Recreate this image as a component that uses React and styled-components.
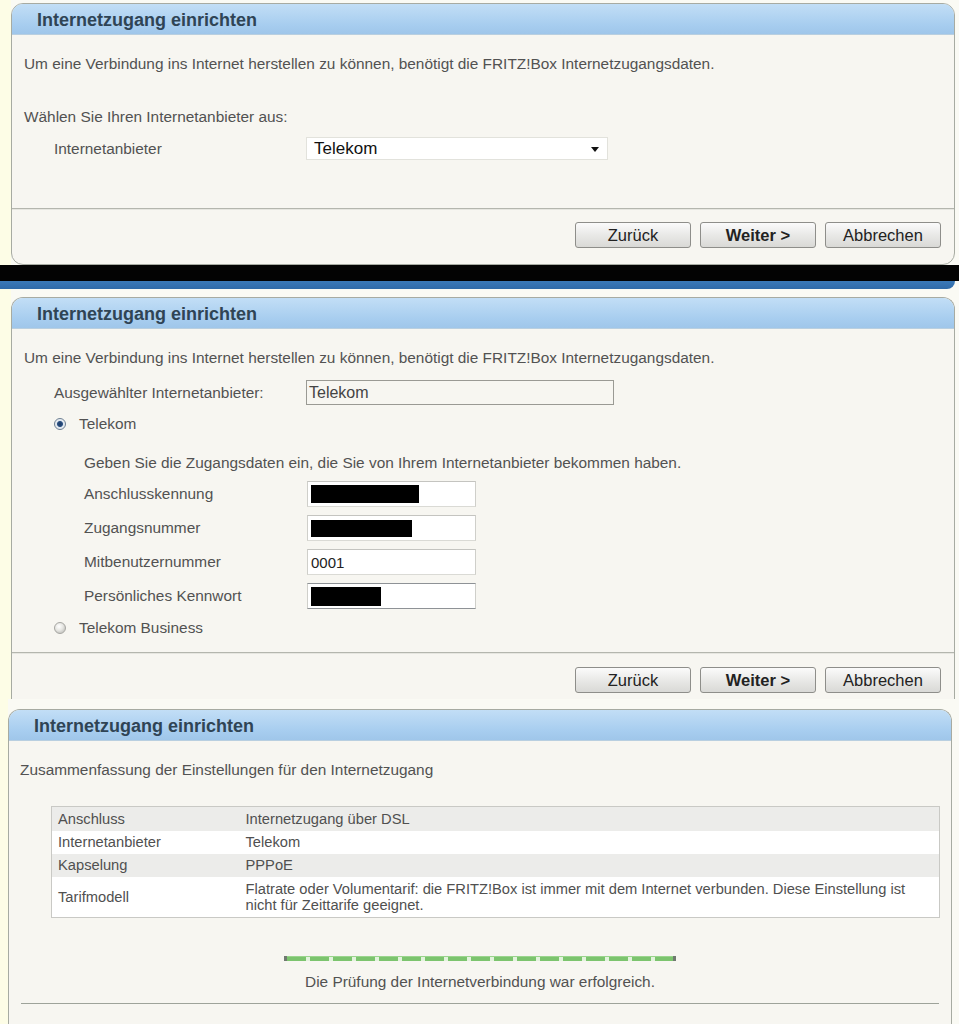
import React from "react";
import styled, { createGlobalStyle } from "styled-components";

const Global = createGlobalStyle`
  html, body { margin: 0; padding: 0; background: #fafaf4; }
  body { font-family: "Liberation Sans", Arial, sans-serif; }
  * { box-sizing: border-box; }
`;

const Page = styled.div`
  width: 959px;
  height: 1024px;
  overflow: hidden;
  display: flex;
  flex-direction: column;
  background: #fafaf4;
`;

const Screen = styled.div`
  display: flex;
  padding-left: ${(p) => p.$left}px;
  padding-top: ${(p) => p.$top || 0}px;
  background: linear-gradient(to right, #fdfde6 0, #fdfde6 ${(p) => p.$left}px, #fafaf4 ${(p) => p.$left}px);
`;

const Panel = styled.section`
  width: 944px;
  background: #f7f6f1;
  border: 1px solid #a7aba2;
  border-bottom: ${(p) => (p.$open ? "none" : "1px solid #a7aba2")};
  border-radius: ${(p) => (p.$open ? "12px 12px 0 0" : "12px")};
  overflow: hidden;
  display: flex;
  flex-direction: column;
`;

const Header = styled.header`
  height: 31px;
  padding: 3px 0 0 25px;
  background: linear-gradient(#c2def6, #a7cdef 70%, #9fc6ea);
  border-bottom: 1px solid #b9cfe0;
  font-size: 18px;
  font-weight: bold;
  line-height: 27px;
  color: #2f4455;
`;

const Body = styled.div`
  display: flex;
  flex-direction: column;
  padding: ${(p) => p.$pad};
  color: #525252;
  font-size: 15.4px;
`;

const Para = styled.p`
  margin: ${(p) => p.$m || "0"};
  line-height: 20px;
  padding-left: ${(p) => p.$indent || 0}px;
  text-align: ${(p) => p.$align || "left"};
`;

const FieldRow = styled.div`
  display: flex;
  align-items: center;
  margin-top: ${(p) => p.$mt || 0}px;
  padding-left: ${(p) => p.$indent}px;
`;

const Label = styled.span`
  width: ${(p) => p.$w}px;
  flex: none;
  line-height: 20px;
`;

const Select = styled.div`
  position: relative;
  width: 302px;
  height: 23px;
  background: #fff;
  border: 1px solid #e2e2dc;
  color: #111;
  font-size: 17px;
  line-height: 21px;
  padding-left: 7px;
  &::after {
    content: "";
    position: absolute;
    right: 8px;
    top: 9px;
    border-left: 4px solid transparent;
    border-right: 4px solid transparent;
    border-top: 5px solid #111;
  }
`;

const ReadOnly = styled.div`
  width: 308px;
  height: 25px;
  border: 1px solid #9a9a94;
  background: #f7f6f1;
  color: #444;
  font-size: 16px;
  line-height: 23px;
  padding-left: 2px;
`;

const TextField = styled.div`
  width: 169px;
  height: 26px;
  background: #fff;
  border: 1px solid #cfcfca;
  border-top-color: ${(p) => (p.$focus ? "#8e9296" : "#c4c4c0")};
  border-bottom-color: ${(p) => (p.$focus ? "#8e9296" : "#dadad5")};
  display: flex;
  align-items: center;
  padding-left: 3px;
  color: #222;
  font-size: 15px;
`;

const Mask = styled.span`
  display: block;
  height: ${(p) => p.$h || 18}px;
  background: #000;
`;

const RadioRow = styled.label`
  display: flex;
  align-items: center;
  gap: 13px;
  padding-left: 30px;
  margin-top: ${(p) => p.$mt}px;
  line-height: 20px;
`;

const Radio = styled.span`
  width: 12px;
  height: 12px;
  border-radius: 50%;
  border: 1px solid ${(p) => (p.$on ? "#6d7f92" : "#a6a6a2")};
  background: ${(p) =>
    p.$on
      ? "radial-gradient(circle, #1d3b66 0, #2a4f80 2.5px, #dfe6ee 3.5px, #f4f6f8 6px)"
      : "radial-gradient(circle at 40% 35%, #ffffff 0, #e6e6e2 4px, #cfcfcb 6px)"};
`;

const Divider = styled.div`
  height: 1px;
  background: #b4b6ae;
  border-bottom: 1px solid #e6e6e0;
  box-sizing: content-box;
`;

const Footer = styled.div`
  display: flex;
  justify-content: flex-end;
  gap: 9px;
  padding: ${(p) => p.$pad};
`;

const Button = styled.button`
  width: 116px;
  height: 26px;
  border: 1px solid #8e8e8a;
  border-radius: 3px;
  background: linear-gradient(#fbfbfb, #e9e9e7 50%, #d9d9d6);
  font-family: inherit;
  font-size: 16.5px;
  font-weight: ${(p) => (p.$primary ? "bold" : "normal")};
  color: #222;
  padding: 0;
  cursor: pointer;
`;

const BlackBar = styled.div`
  height: 18px;
  background: #030303;
`;

const BlueBar = styled.div`
  height: 9px;
  width: 955px;
  background: linear-gradient(#3a79b8, #2f6aa8);
  border-bottom-right-radius: 9px;
`;

const Table = styled.table`
  margin: 26px 0 0 42px;
  width: 889px;
  table-layout: fixed;
  border-collapse: collapse;
  border: 1px solid #c9c9c5;
  font-size: 14.7px;
  color: #505050;
`;

const Tr = styled.tr`
  background: ${(p) => (p.$shade ? "#ececea" : "#ffffff")};
`;

const Td = styled.td`
  padding: 0 6px;
  height: ${(p) => (p.$tall ? "41px" : p.$first ? "24px" : "23px")};
  line-height: 16px;
  vertical-align: middle;
`;

const Progress = styled.div`
  align-self: center;
  margin-top: 38px;
  width: 392px;
  height: 5px;
  border-left: 3px solid #707a70;
  border-right: 3px solid #707a70;
  background:
    repeating-linear-gradient(to right, #7cc46e 0, #7cc46e 19px, #e3f3dd 19px, #e3f3dd 23px),
    #7cc46e;
  box-shadow: inset 0 1px 0 #9ad58d;
`;

const InnerRule = styled.div`
  margin: 11px 12px 0 12px;
  height: 1px;
  background: #9ea39a;
`;

const summary = [
  ["Anschluss", "Internetzugang über DSL"],
  ["Internetanbieter", "Telekom"],
  ["Kapselung", "PPPoE"],
  [
    "Tarifmodell",
    "Flatrate oder Volumentarif: die FRITZ!Box ist immer mit dem Internet verbunden. Diese Einstellung ist nicht für Zeittarife geeignet.",
  ],
];

const credentials = [
  { label: "Anschlusskennung", mask: 108 },
  { label: "Zugangsnummer", mask: 101, h: 17 },
  { label: "Mitbenutzernummer", text: "0001" },
  { label: "Persönliches Kennwort", mask: 70, h: 19, focus: true },
];

function Buttons({ pad }) {
  return (
    <Footer $pad={pad}>
      <Button>Zurück</Button>
      <Button $primary>Weiter &gt;</Button>
      <Button>Abbrechen</Button>
    </Footer>
  );
}

export default function App() {
  return (
    <Page>
      <Global />
      <Screen $left={11} $top={3}>
        <Panel>
          <Header>Internetzugang einrichten</Header>
          <Body $pad="19px 0 48px 12px">
            <Para>
              Um eine Verbindung ins Internet herstellen zu können, benötigt die FRITZ!Box Internetzugangsdaten.
            </Para>
            <Para $m="33px 0 0 0">Wählen Sie Ihren Internetanbieter aus:</Para>
            <FieldRow $mt={10} $indent={30}>
              <Label $w={252}>Internetanbieter</Label>
              <Select>Telekom</Select>
            </FieldRow>
          </Body>
          <Divider />
          <Buttons pad="12px 13px 16px 0" />
        </Panel>
      </Screen>

      <BlackBar />
      <BlueBar />

      <Screen $left={11} $top={8}>
        <Panel $open>
          <Header>Internetzugang einrichten</Header>
          <Body $pad="19px 0 14px 12px">
            <Para>
              Um eine Verbindung ins Internet herstellen zu können, benötigt die FRITZ!Box Internetzugangsdaten.
            </Para>
            <FieldRow $mt={12} $indent={30}>
              <Label $w={252}>Ausgewählter Internetanbieter:</Label>
              <ReadOnly>Telekom</ReadOnly>
            </FieldRow>
            <RadioRow $mt={9}>
              <Radio $on />
              Telekom
            </RadioRow>
            <Para $m="19px 0 0 0" $indent={60}>
              Geben Sie die Zugangsdaten ein, die Sie von Ihrem Internetanbieter bekommen haben.
            </Para>
            {credentials.map((c) => (
              <FieldRow key={c.label} $mt={8} $indent={60}>
                <Label $w={223}>{c.label}</Label>
                <TextField $focus={c.focus}>
                  {c.text ? c.text : <Mask $h={c.h} style={{ width: c.mask }} />}
                </TextField>
              </FieldRow>
            ))}
            <RadioRow $mt={9}>
              <Radio />
              Telekom Business
            </RadioRow>
          </Body>
          <Divider />
          <Buttons pad="13px 13px 6px 0" />
        </Panel>
      </Screen>

      <Screen $left={8} $top={10}>
        <Panel $open>
          <Header>Internetzugang einrichten</Header>
          <Body $pad="19px 0 20px 0">
            <Para $indent={11}>Zusammenfassung der Einstellungen für den Internetzugang</Para>
            <Table>
              <colgroup>
                <col style={{ width: 188 }} />
                <col />
              </colgroup>
              <tbody>
                {summary.map(([k, v], i) => (
                  <Tr key={k} $shade={i % 2 === 0}>
                    <Td $first={i === 0} $tall={i === 3}>{k}</Td>
                    <Td $first={i === 0} $tall={i === 3}>{v}</Td>
                  </Tr>
                ))}
              </tbody>
            </Table>
            <Progress />
            <Para $m="11px 0 0 0" $align="center">
              Die Prüfung der Internetverbindung war erfolgreich.
            </Para>
            <InnerRule />
          </Body>
        </Panel>
      </Screen>
    </Page>
  );
}
